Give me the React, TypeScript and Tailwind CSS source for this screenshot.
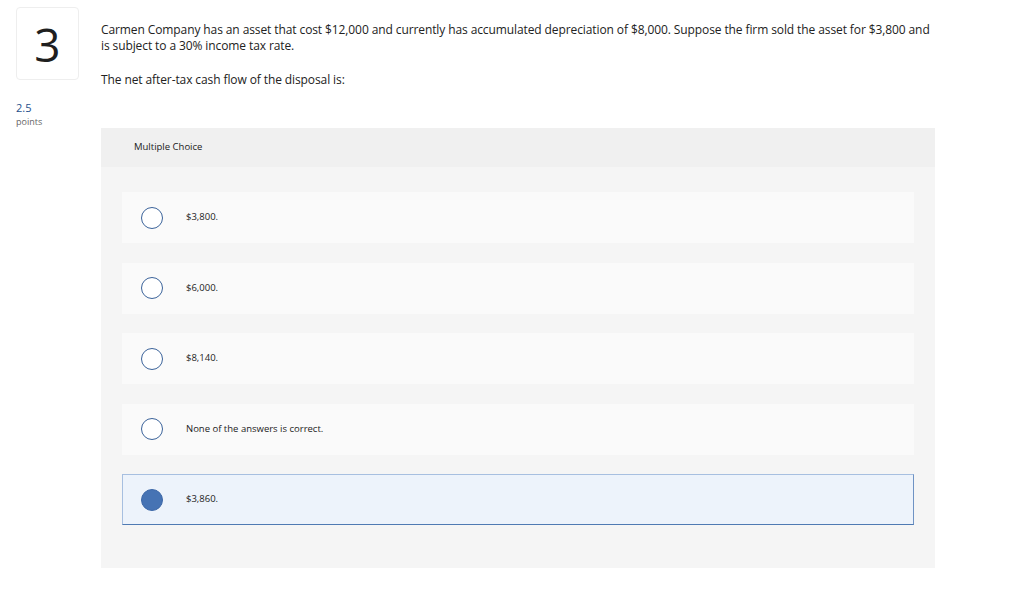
import React from "react";

const options = [
  { label: "$3,800.", selected: false },
  { label: "$6,000.", selected: false },
  { label: "$8,140.", selected: false },
  { label: "None of the answers is correct.", selected: false },
  { label: "$3,860.", selected: true },
];

function Radio({ checked }: { checked: boolean }) {
  return checked ? (
    <span className="block w-[22px] h-[22px] rounded-full bg-[#4673b4] border border-[#3d68a8]" />
  ) : (
    <span className="block w-[22px] h-[22px] rounded-full bg-white border border-[#3b639a]" />
  );
}

export default function App() {
  return (
    <div
      className="w-[1024px] h-[601px] bg-white text-[#222] flex"
      style={{ fontFamily: '"Open Sans", "Lato", sans-serif' }}
    >
      {/* Left: question number + points */}
      <div className="w-[101px] pl-[16px] pt-[7px] flex-shrink-0">
        <div className="w-[63px] h-[73px] rounded-[4px] border border-[#eeeeee] flex items-center justify-center">
          <span className="text-[46px] leading-none text-[#1f1f1f] font-normal">3</span>
        </div>
        <div className="mt-[21px] text-[11px] leading-[14px] text-[#1e4f8c]">2.5</div>
        <div className="mt-[1px] text-[9px] leading-[12px] text-[#666]">points</div>
      </div>

      {/* Right: question */}
      <div className="w-[834px] pt-[22px]">
        <p className="text-[12px] leading-[16px] tracking-[-0.1px] text-[#222]">
          Carmen Company has an asset that cost $12,000 and currently has accumulated depreciation of $8,000. Suppose the firm sold the asset for $3,800 and is subject to a 30% income tax rate.
        </p>
        <p className="mt-[18px] text-[12px] leading-[16px] tracking-[-0.1px] text-[#222]">
          The net after-tax cash flow of the disposal is:
        </p>

        <div className="mt-[40px] bg-[#f5f5f5] h-[440px]">
          <div className="h-[39px] bg-[#f0f0f0] pl-[33px] flex items-center text-[9.5px] text-[#222]">
            Multiple Choice
          </div>
          <div className="px-[21px] pt-[25px] flex flex-col gap-[19.5px]">
            {options.map((o) => (
              <div
                key={o.label}
                className={
                  o.selected
                    ? "h-[51px] flex items-center pl-[18px] bg-[#edf3fb] border border-[#a7bfe0] border-b-[#4f7ab3] border-r-[#6f93c4]"
                    : "h-[51px] flex items-center pl-[19px] bg-[#fafafa]"
                }
              >
                <Radio checked={o.selected} />
                <span className="ml-[23px] text-[9.5px] text-[#222]">{o.label}</span>
              </div>
            ))}
          </div>
        </div>
      </div>
    </div>
  );
}
